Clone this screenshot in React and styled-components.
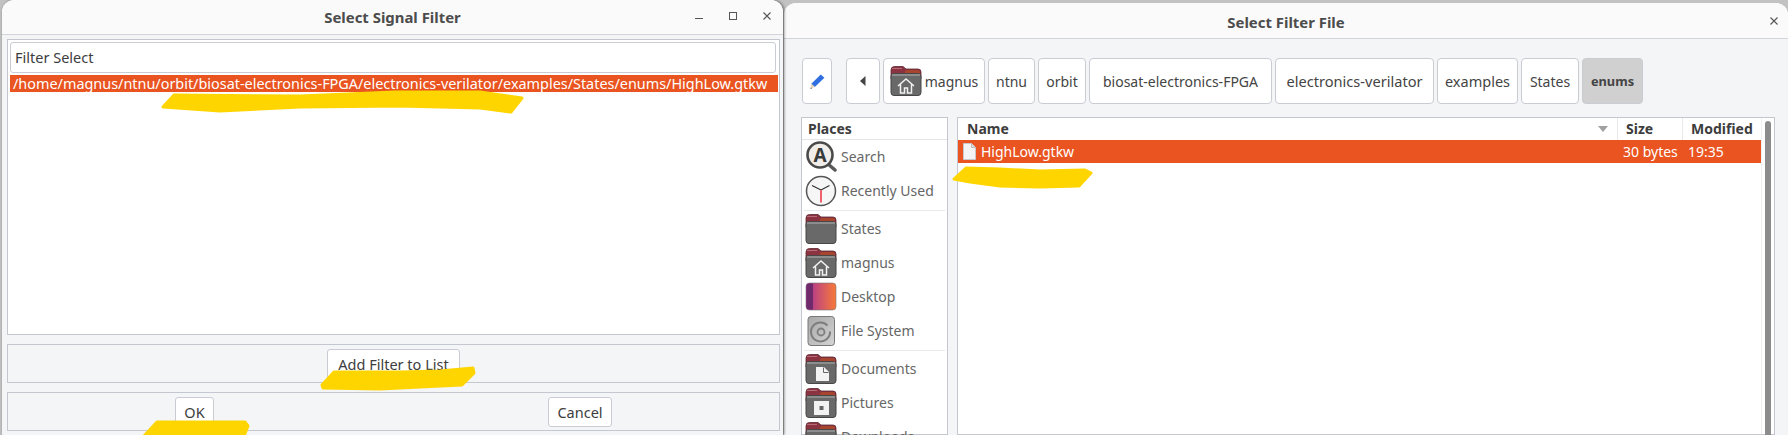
import React from "react";
import styled, { createGlobalStyle } from "styled-components";

const GlobalStyle = createGlobalStyle`
  html, body {
    margin: 0;
    padding: 0;
    background: #c2c2c2;
  }
  body {
    font-family: "Noto Sans", "Open Sans", sans-serif;
    font-size: 14px;
    color: #3d3d3d;
  }
`;

const Stage = styled.div`
  position: relative;
  display: flex;
  width: 1788px;
  height: 435px;
  overflow: hidden;
  background: #c2c2c2;
`;

const Scribbles = styled.svg`
  position: absolute;
  left: 0;
  top: 0;
  z-index: 2;
  pointer-events: none;
`;

const LeftWindow = styled.section`
  position: relative;
  z-index: 1;
  display: flex;
  flex-direction: column;
  flex: none;
  width: 781px;
  margin-left: 2px;
  border-radius: 12px 12px 0 0;
  background: #f4f5f7;
  box-shadow: 1px 0 3px rgba(0, 0, 0, 0.55);
  font-size: 14.5px;
`;

const TitleBar = styled.header`
  position: relative;
  display: flex;
  align-items: center;
  justify-content: center;
  flex: none;
  height: ${(p) => p.$height}px;
  box-sizing: border-box;
  padding-top: ${(p) => p.$nudge || 0}px;
  border-bottom: 1px solid #d2d4da;
  border-radius: 12px 12px 0 0;
  background: #fafafa;
`;

const TitleText = styled.h1`
  margin: 0;
  font-size: 14.9px;
  font-weight: 700;
  color: #4c4c4c;
`;

const WindowControls = styled.div`
  position: absolute;
  right: ${(p) => p.$right}px;
  top: ${(p) => p.$top}px;
  display: flex;
  gap: 26px;
  align-items: center;
`;

const Frame = styled.div`
  box-sizing: border-box;
  margin: 0 3px 0 5px;
  border: 1px solid #c4c7cf;
`;

const ListFrame = styled(Frame)`
  height: 296px;
  margin-top: 4px;
  padding: 2px 1px 0 2px;
  background: #fff;
`;

const FilterLabel = styled.div`
  display: flex;
  align-items: center;
  box-sizing: border-box;
  height: 31px;
  margin-right: 2px;
  padding: 0 0 2px 4px;
  border: 1px solid #c9ccd3;
  border-radius: 3px;
`;

const SelectedPath = styled.div`
  height: 17px;
  margin-top: 2px;
  padding-left: 3px;
  background: #e95420;
  color: #fff;
  font-size: 14.42px;
  line-height: 17px;
  white-space: nowrap;
  overflow: hidden;
`;

const ButtonBar = styled(Frame)`
  display: flex;
  align-items: center;
  justify-content: ${(p) => p.$justify};
  height: 39px;
  margin-top: ${(p) => p.$top}px;
`;

const PushButton = styled.button`
  box-sizing: border-box;
  width: ${(p) => p.$width}px;
  height: 30px;
  padding: 0;
  border: 1px solid #c9ccd3;
  border-radius: 3px;
  background: #fff;
  color: #3d3d3d;
  font: inherit;
`;

const RightWindow = styled.section`
  display: flex;
  flex-direction: column;
  flex: 1;
  min-width: 0;
  margin-top: 3px;
  margin-left: 1px;
  border-radius: 12px 12px 0 0;
  background: #f4f5f7;
`;

const Toolbar = styled.div`
  display: flex;
  flex: none;
  height: 46px;
  margin: 19px 0 13px 18px;
`;

const Crumbs = styled.div`
  display: flex;
  gap: 3px;
  margin-left: 14px;
`;

const Crumb = styled.button`
  display: flex;
  align-items: center;
  justify-content: center;
  gap: 3px;
  box-sizing: border-box;
  width: ${(p) => p.$width}px;
  height: 46px;
  padding: 0;
  border: 1px solid #c9ccd3;
  border-radius: 4px;
  background: ${(p) => (p.$active ? "#d0d0d0" : "#fff")};
  color: #444;
  font-family: inherit;
  font-size: ${(p) => p.$size || 14}px;
  font-weight: ${(p) => (p.$active ? 700 : 400)};
`;

const Body = styled.div`
  display: flex;
  flex: 1;
  gap: 9px;
  min-height: 0;
  margin: 0 13px 0 17px;
`;

const Places = styled.aside`
  flex: none;
  box-sizing: border-box;
  width: 147px;
  border: 1px solid #c4c7cf;
  background: #fff;
`;

const ColumnTitle = styled.div`
  padding-left: ${(p) => p.$pad}px;
  font-size: 14px;
  font-weight: 700;
  line-height: 21px;
  color: #3d3d3d;
`;

const PlacesHead = styled(ColumnTitle)`
  height: 21px;
  border-bottom: 1px solid #e4e5e8;
`;

const PlaceRow = styled.div`
  display: flex;
  align-items: center;
  gap: 4px;
  height: 34px;
  padding-left: 3px;
  color: #666;
  font-size: 14px;
  white-space: nowrap;
`;

const PlaceName = styled.span`
  margin-bottom: 2px;
`;

const PlaceRule = styled.div`
  height: 1px;
  margin: 2px 2px 1px;
  background: #e8e9ec;
`;

const Files = styled.div`
  display: flex;
  flex: 1;
  min-width: 0;
  box-sizing: border-box;
  border: 1px solid #c4c7cf;
  background: #fff;
`;

const FileTable = styled.div`
  flex: 1;
  min-width: 0;
`;

const FileGrid = styled.div`
  display: grid;
  grid-template-columns: 659px 65px 79px;
  align-items: center;
`;

const FileHead = styled(FileGrid)`
  height: 22px;
`;

const HeadCell = styled(ColumnTitle)`
  position: relative;
  height: 22px;
  border-left: ${(p) => (p.$divided ? "1px solid #e8e9ec" : "none")};
`;

const SortArrow = styled.span`
  position: absolute;
  right: 9px;
  top: 8px;
  border-left: 5px solid transparent;
  border-right: 5px solid transparent;
  border-top: 6px solid #a0a0a0;
`;

const FileRow = styled(FileGrid)`
  height: 23px;
  background: #e95420;
  color: #fff;
  font-size: 14px;
`;

const FileName = styled.div`
  display: flex;
  align-items: center;
  gap: 5px;
  padding-left: 5px;
`;

const FileCell = styled.div`
  padding-left: ${(p) => p.$pad}px;
  white-space: nowrap;
`;

const ScrollGutter = styled.div`
  flex: none;
  box-sizing: border-box;
  width: 13px;
  padding: 3px 3px 0;
  border-left: 1px solid #f0f0f0;
`;

const ScrollThumb = styled.div`
  width: 6px;
  height: 400px;
  border-radius: 3px 3px 0 0;
  background: #8c8c8c;
`;

const Minimize = () => (
  <svg width="8" height="8" viewBox="0 0 8 8">
    <path d="M0 6.5h8" stroke="#555" strokeWidth="1" fill="none" />
  </svg>
);

const Maximize = () => (
  <svg width="8" height="8" viewBox="0 0 8 8">
    <rect x="0.5" y="0.5" width="7" height="7" stroke="#555" fill="none" />
  </svg>
);

const CloseIcon = () => (
  <svg width="8" height="8" viewBox="0 0 8 8">
    <path d="M0.5 0.5l7 7M7.5 0.5l-7 7" stroke="#555" strokeWidth="1.1" fill="none" />
  </svg>
);

const PencilIcon = () => (
  <svg width="17" height="17" viewBox="0 0 17 17">
    <path d="M11.8 1.4l3.6 3.4-9.6 9.3-3.5-3.4z" fill="#2f6fe0" />
    <path d="M2.3 10.700l3.500 3.400-4.400 1.600z" fill="#e8d5b5" />
    <path d="M1.900 14.400l1.200 1.100-1.700.5z" fill="#555" />
  </svg>
);

const BackArrow = () => (
  <svg width="6" height="10" viewBox="0 0 6 10">
    <path d="M5.500 0v10L0 5z" fill="#444" />
  </svg>
);

const glyphs = {
  home: (
    <path
      d="M8 21l8-7 8 7M10.500 19.500V28h4v-5h3v5h4v-8.500"
      fill="none"
      stroke="#f2f2f2"
      strokeWidth="1.500"
    />
  ),
  doc: (
    <>
      <path d="M11 14h8l5 5v9H11z" fill="#f2f2f2" />
      <path d="M18.500 14.500v5h5" fill="none" stroke="#666" strokeWidth="1" />
    </>
  ),
  picture: (
    <>
      <rect x="9" y="14" width="15" height="14" fill="#f2f2f2" />
      <rect x="14.500" y="19" width="4" height="4" fill="#666" />
    </>
  ),
};

const Folder = ({ glyph }) => (
  <svg width="32" height="32" viewBox="0 0 32 32">
    <path d="M1 5a3.500 3.500 0 0 1 3.500-3.500H13l3 2.500h12a3 3 0 0 1 3 3v7H1z" fill="#8c3342" stroke="#5c2630" strokeWidth="0.800" />
    <path d="M16 5h12a2 2 0 0 1 2 2v2H14z" fill="#a8452f" />
    <path d="M2 3.500h10" stroke="#c07a86" strokeWidth="0.800" />
    <rect x="1" y="8.500" width="30" height="22" rx="3" fill="#696969" stroke="#474747" />
    <path d="M2 10h28" stroke="#9a9a9a" strokeWidth="1.500" />
    {glyph && glyphs[glyph]}
  </svg>
);

const SearchIcon = () => (
  <svg width="32" height="32" viewBox="0 0 32 32">
    <path d="M23 23l7 6" stroke="#5a5a5a" strokeWidth="3.500" strokeLinecap="round" />
    <circle cx="15" cy="14" r="12.500" fill="#f1eee9" stroke="#4a4a4a" strokeWidth="2.600" />
    <text x="15" y="20.500" textAnchor="middle" fontSize="19" fontWeight="700" fontFamily="Noto Sans" fill="#3a3a3a">
      A
    </text>
  </svg>
);

const ClockIcon = () => (
  <svg width="32" height="32" viewBox="0 0 32 32">
    <circle cx="16" cy="16" r="14.500" fill="#f6f6f6" stroke="#555" strokeWidth="1.500" />
    <path d="M16 15L7 10.500M16 15l8.500-4.500" stroke="#333" strokeWidth="1.200" />
    <path d="M15 15h2v12.500h-2z" fill="#f0606e" />
  </svg>
);

const DesktopIcon = () => (
  <svg width="32" height="32" viewBox="0 0 32 32">
    <defs>
      <linearGradient id="desk" x1="0" y1="0" x2="1" y2="0">
        <stop offset="0" stopColor="#a8309a" />
        <stop offset="1" stopColor="#f87a38" />
      </linearGradient>
    </defs>
    <rect x="1" y="2" width="30" height="27" rx="3.500" fill="url(#desk)" stroke="#777" strokeOpacity="0.600" />
    <path d="M4.500 2.500H8v26H4.500a3 3 0 0 1-3-3v-20a3 3 0 0 1 3-3z" fill="#6e2a6a" />
  </svg>
);

const DriveIcon = () => (
  <svg width="32" height="32" viewBox="0 0 32 32">
    <defs>
      <linearGradient id="drive" x1="0" y1="0" x2="1" y2="1">
        <stop offset="0" stopColor="#a8a8a8" />
        <stop offset="1" stopColor="#d4d4d4" />
      </linearGradient>
    </defs>
    <rect x="3" y="1.500" width="26.500" height="29" rx="3" fill="url(#drive)" stroke="#777" />
    <path d="M22.500 10.500a9.500 9.500 0 1 0 2.500 6" fill="none" stroke="#7d7d7d" strokeWidth="2" />
    <circle cx="16" cy="17" r="3.500" fill="none" stroke="#7d7d7d" strokeWidth="1.800" />
  </svg>
);

const FileIcon = () => (
  <svg width="13" height="17" viewBox="0 0 13 17">
    <path d="M0.500 0.500h8l4 4v12h-12z" fill="#f4f4f4" stroke="#c9c9c9" />
    <path d="M8.500 0.500v4h4" fill="#ddd" stroke="#bbb" />
  </svg>
);

const crumbs = [
  { name: "ntnu", width: 47 },
  { name: "orbit", width: 48 },
  { name: "biosat-electronics-FPGA", width: 183 },
  { name: "electronics-verilator", width: 159, size: 14.6 },
  { name: "examples", width: 81, size: 14.5 },
  { name: "States", width: 58 },
];

const upperPlaces = [
  { name: "Search", icon: <SearchIcon /> },
  { name: "Recently Used", icon: <ClockIcon /> },
];

const middlePlaces = [
  { name: "States", icon: <Folder /> },
  { name: "magnus", icon: <Folder glyph="home" /> },
  { name: "Desktop", icon: <DesktopIcon /> },
  { name: "File System", icon: <DriveIcon /> },
];

const lowerPlaces = [
  { name: "Documents", icon: <Folder glyph="doc" /> },
  { name: "Pictures", icon: <Folder glyph="picture" /> },
  { name: "Downloads", icon: <Folder glyph="doc" /> },
];

const PlaceList = ({ items }) =>
  items.map((item) => (
    <PlaceRow key={item.name}>
      {item.icon}
      <PlaceName>{item.name}</PlaceName>
    </PlaceRow>
  ));

const App = () => {
  return (
    <Stage>
      <GlobalStyle />
      <LeftWindow>
        <TitleBar $height={35}>
          <TitleText>Select Signal Filter</TitleText>
          <WindowControls $right={12} $top={12}>
            <Minimize />
            <Maximize />
            <CloseIcon />
          </WindowControls>
        </TitleBar>
        <ListFrame>
          <FilterLabel>Filter Select</FilterLabel>
          <SelectedPath>/home/magnus/ntnu/orbit/biosat-electronics-FPGA/electronics-verilator/examples/States/enums/HighLow.gtkw</SelectedPath>
        </ListFrame>
        <ButtonBar $top={9} $justify="center">
          <PushButton $width={133}>Add Filter to List</PushButton>
        </ButtonBar>
        <ButtonBar $top={9} $justify="space-around">
          <PushButton $width={39}>OK</PushButton>
          <PushButton $width={64}>Cancel</PushButton>
        </ButtonBar>
      </LeftWindow>

      <RightWindow>
        <TitleBar $height={36} $nudge={2}>
          <TitleText>Select Filter File</TitleText>
          <WindowControls $right={10} $top={14}>
            <CloseIcon />
          </WindowControls>
        </TitleBar>
        <Toolbar>
          <Crumb $width={30}>
            <PencilIcon />
          </Crumb>
          <Crumbs>
            <Crumb $width={34}>
              <BackArrow />
            </Crumb>
            <Crumb $width={102}>
              <Folder glyph="home" />
              magnus
            </Crumb>
            {crumbs.map((crumb) => (
              <Crumb key={crumb.name} $width={crumb.width} $size={crumb.size}>
                {crumb.name}
              </Crumb>
            ))}
            <Crumb $width={61} $size={12.8} $active>
              enums
            </Crumb>
          </Crumbs>
        </Toolbar>
        <Body>
          <Places>
            <PlacesHead $pad={6}>Places</PlacesHead>
            <PlaceList items={upperPlaces} />
            <PlaceRule />
            <PlaceList items={middlePlaces} />
            <PlaceRule />
            <PlaceList items={lowerPlaces} />
          </Places>
          <Files>
            <FileTable>
              <FileHead>
                <HeadCell $pad={9}>
                  Name
                  <SortArrow />
                </HeadCell>
                <HeadCell $pad={8} $divided>
                  Size
                </HeadCell>
                <HeadCell $pad={8} $divided>
                  Modified
                </HeadCell>
              </FileHead>
              <FileRow>
                <FileName>
                  <FileIcon />
                  HighLow.gtkw
                </FileName>
                <FileCell $pad={6}>30 bytes</FileCell>
                <FileCell $pad={6}>19:35</FileCell>
              </FileRow>
            </FileTable>
            <ScrollGutter>
              <ScrollThumb />
            </ScrollGutter>
          </Files>
        </Body>
      </RightWindow>

      <Scribbles width="1788" height="435" viewBox="0 0 1788 435">
        <g fill="#ffd500" stroke="#ffd500" strokeWidth="3" strokeLinejoin="round">
          <path d="M163 107L174 95L300 96L395 92L480 92L522 98L511 112L480 108L400 106L300 107L220 111z" />
          <path d="M334 372L400 372L440 371L473 368L474 373L462 385L420 387L380 389L323 388L322 385z" />
          <path d="M157 422L245 422L248 426L244 436L144 436z" />
          <path d="M954 179L966 168L1000 169L1040 171L1085 170L1091 173L1079 186L1040 187L1000 186L970 182z" />
        </g>
      </Scribbles>
    </Stage>
  );
};

export default App;
